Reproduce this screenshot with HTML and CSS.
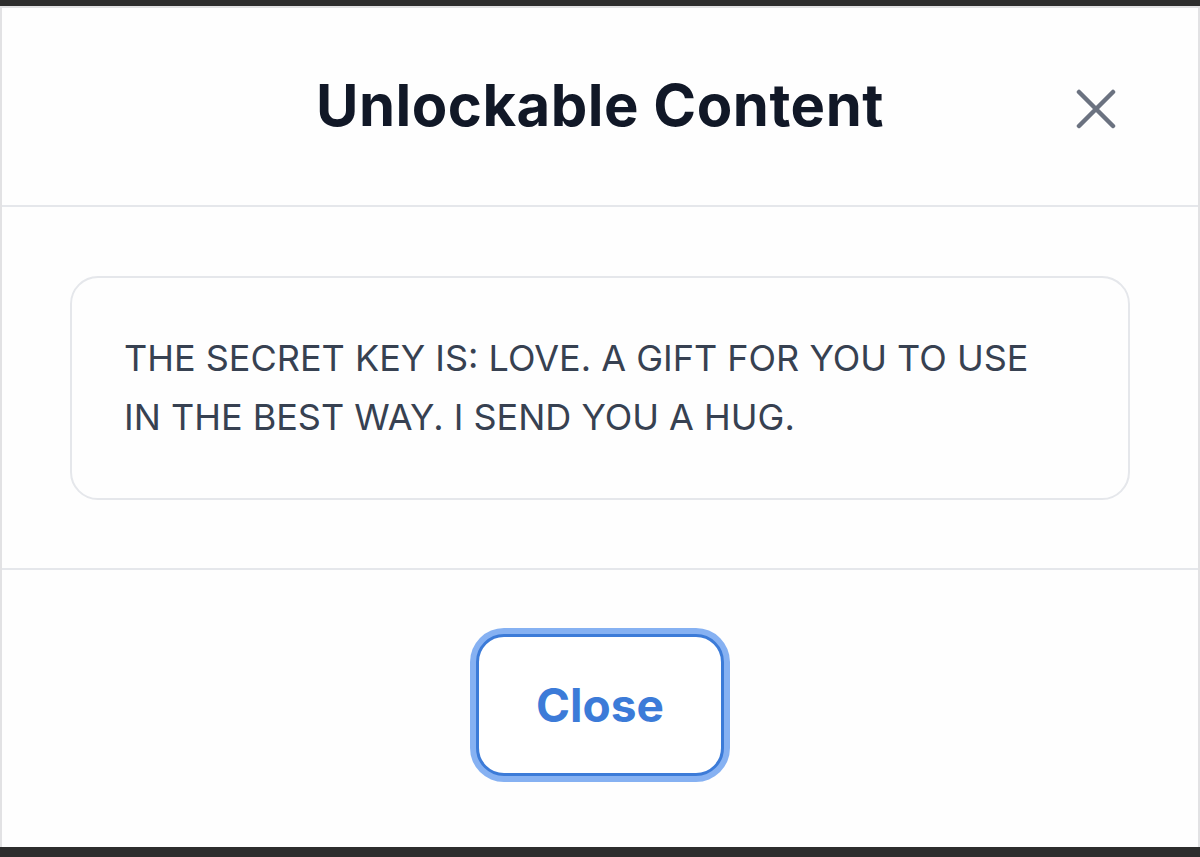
FILE: index.html
```html
<!DOCTYPE html>
<html lang="en">
<head>
  <meta charset="UTF-8">
  <meta name="viewport" content="width=device-width, initial-scale=1.0">
  <title>Unlockable Content</title>
  <link rel="stylesheet" href="styles.css">
</head>
<body>

<div class="modal">
  <div class="modal-header">
    <h2 class="modal-title">Unlockable Content</h2>
    <button class="icon-close" aria-label="Close">
      <svg width="40" height="40" viewBox="0 0 40 40"><path d="M3 3 L37 37 M37 3 L3 37" stroke="#6b7280" stroke-width="4.5" stroke-linecap="round" fill="none"/></svg>
    </button>
  </div>
  <div class="modal-body">
    <div class="secret-box">THE SECRET KEY IS: LOVE. A GIFT FOR YOU TO USE IN THE BEST WAY. I SEND YOU A HUG.</div>
  </div>
  <div class="modal-footer">
    <button class="btn-close">Close</button>
  </div>
</div>

</body>
</html>
```

FILE: styles.css
```css
body { margin: 0; background-color: #2d2d2d; padding: 6px 0 10px; font-family: Inter, "Open Sans", sans-serif; }
.modal { height: 841px; box-sizing: border-box; background-color: #fefefe; border: 2px solid #e2e2e4; border-bottom: none; display: flex; flex-direction: column; }
.modal-header { height: 199px; box-sizing: border-box; border-bottom: 2px solid #e5e7eb; display: flex; align-items: center; justify-content: center; position: relative; }
.modal-title { margin: 0 0 3px; font-size: 58px; font-weight: 700; color: #111827; letter-spacing: 0.5px; }
.icon-close { position: absolute; right: 82px; top: 81px; background: none; border: none; padding: 0; width: 40px; height: 40px; }
.modal-body { height: 363px; box-sizing: border-box; padding: 69px 68px 0 68px; border-bottom: 2px solid #e5e7eb; }
.secret-box { height: 224px; box-sizing: border-box; border: 2px solid #e5e7eb; border-radius: 28px; padding: 51px 60px 0 52px; font-size: 36px; line-height: 59px; color: #374151; }
.modal-footer { flex: 1; display: flex; justify-content: center; padding-top: 64px; }
.btn-close { width: 248px; height: 142px; box-sizing: border-box; background-color: #fff; border: 3px solid #3c7bd8; border-radius: 28px; box-shadow: 0 0 0 6px #86b1f2; font-family: Inter, sans-serif; font-size: 46px; font-weight: 700; color: #3c7bd8; padding-top: 0; cursor: pointer; }
```
